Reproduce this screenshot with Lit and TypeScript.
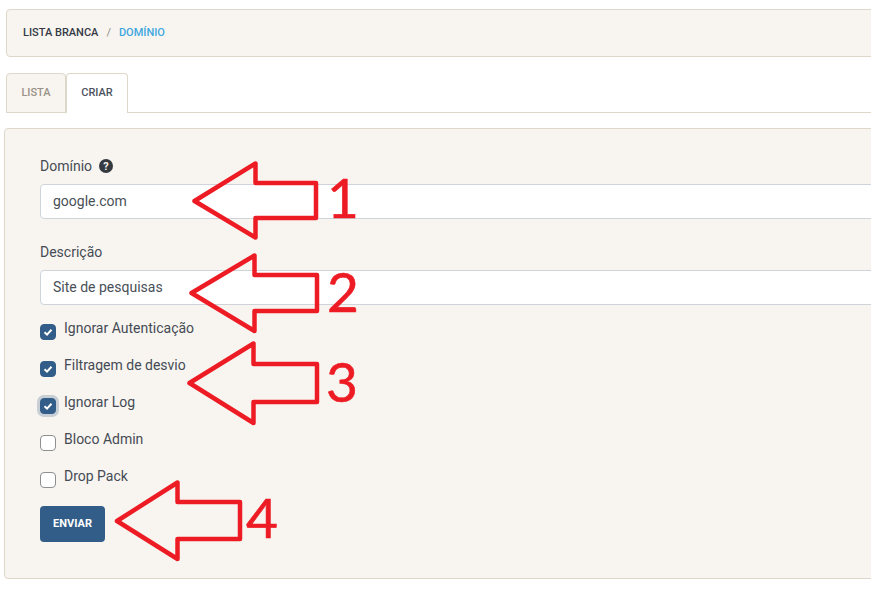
import { LitElement, html, css, svg } from "lit";
import { customElement } from "lit/decorators.js";

const ARROWS = [
  "194.5,201 255.5,163.5 255.5,183 316,183 316,218 255.5,218 255.5,237.5",
  "191.5,293 254.5,255.5 254.5,275 317,275 317,311 254.5,311 254.5,331",
  "189.5,383 253.5,343.5 253.5,364 317,364 317,402 253.5,402 253.5,423",
  "117,521 177.5,482.5 177.5,502 240,502 240,539 177.5,539 177.5,559",
];
const DIGITS: [string, number, number][] = [
  ["1", 327, 218],
  ["2", 327, 312],
  ["3", 326, 402],
  ["4", 246, 538],
];
const CHECKS = [
  { label: "Ignorar Autenticação", on: true },
  { label: "Filtragem de desvio", on: true },
  { label: "Ignorar Log", on: true, focus: true },
  { label: "Bloco Admin", on: false },
  { label: "Drop Pack", on: false },
];

@customElement("app-root")
export class AppRoot extends LitElement {
  static styles = css`
    :host {
      display: block;
      position: relative;
      width: 871px;
      height: 605px;
      overflow: hidden;
      background: #fff;
      font-family: Roboto, "Liberation Sans", sans-serif;
      color: #3e3f3a;
    }
    .page {
      width: 1000px;
      padding: 9px 0 0 4px;
      box-sizing: border-box;
    }
    .crumbs {
      margin-left: 2px;
      height: 48px;
      box-sizing: border-box;
      display: flex;
      align-items: center;
      gap: 7px;
      padding: 0 0 2px 16px;
      background: #f8f5f0;
      border: 1px solid #dfd7ca;
      border-radius: 4px;
      font-size: 11px;
      font-weight: 500;
    }
    .crumbs .root { color: #343a46; }
    .crumbs .sep { color: #8e8c84; font-weight: 400; margin: 0 1px; }
    .crumbs .cur { color: #3fa7e0; }
    .tabs {
      margin: 16px 0 0 2px;
      height: 39px;
      display: flex;
      border-bottom: 1px solid #dfd7ca;
    }
    .tab {
      height: 40px;
      box-sizing: border-box;
      display: flex;
      align-items: center;
      justify-content: center;
      padding-bottom: 2px;
      font-size: 11px;
      font-weight: 500;
      border: 1px solid #dfd7ca;
      border-radius: 4px 4px 0 0;
    }
    .tab.off { width: 60px; background: #f8f5f0; color: #9a9188; }
    .tab.on { width: 62px; background: #fff; color: #4c5360; border-bottom: 0; }
    .panel {
      margin-top: 15px;
      height: 451px;
      box-sizing: border-box;
      padding: 27px 0 0 35px;
      background: #f8f5f0;
      border: 1px solid #dfd7ca;
      border-radius: 4px;
    }
    label.field {
      display: flex;
      align-items: center;
      gap: 7px;
      height: 20px;
      font-size: 14px;
      color: #454b55;
    }
    .help { width: 14px; height: 14px; display: block; }
    .input {
      margin: 8px 0 23px;
      height: 35px;
      box-sizing: border-box;
      display: flex;
      align-items: center;
      padding: 0 0 2px 12px;
      background: #fff;
      border: 1px solid #ced4da;
      border-radius: 4px 0 0 4px;
      font-size: 14px;
      color: #495057;
    }
    .input.last { margin-bottom: 0; }
    .checks { display: flex; flex-direction: column; margin-top: 11px; gap: 17px; }
    .check { display: flex; gap: 8px; height: 20px; font-size: 14px; color: #454b55; line-height: 20px; }
    .check .txt { margin-top: 2px; }
    .box {
      margin-top: 8px;
      width: 16px;
      height: 16px;
      box-sizing: border-box;
      border-radius: 4px;
      border: 1px solid #8f8f8f;
      background: #fff;
      flex: none;
      display: flex;
      align-items: center;
      justify-content: center;
    }
    .box.on { background: #325d88; border-color: #325d88; }
    .box.focus { box-shadow: 0 0 0 3px rgba(50, 93, 136, 0.25); }
    .box svg { width: 10px; height: 10px; display: block; }
    button {
      display: block;
      margin-top: 22px;
      width: 65px;
      height: 36px;
      padding: 0 0 2px;
      border: 0;
      border-radius: 4px;
      background: #325d88;
      color: #fff;
      font: 700 11px Roboto, "Liberation Sans", sans-serif;
    }
    .overlay { position: absolute; inset: 0; width: 871px; height: 605px; pointer-events: none; }
    .overlay polygon { fill: none; stroke: #ed1c24; stroke-width: 4.5; stroke-linejoin: round; }
    .overlay text { fill: #ed1c24; stroke: #ed1c24; stroke-width: 0.6; font-family: Lato, sans-serif; font-size: 55px; }
  `;

  render() {
    return html`
      <div class="page">
        <div class="crumbs">
          <span class="root">LISTA BRANCA</span><span class="sep">/</span><span class="cur">DOMÍNIO</span>
        </div>
        <div class="tabs">
          <div class="tab off">LISTA</div>
          <div class="tab on">CRIAR</div>
        </div>
        <div class="panel">
          <label class="field">Domínio
            <svg class="help" viewBox="0 0 14 14">
              <circle cx="7" cy="7" r="7" fill="#343a40"></circle>
              <text x="7" y="11" text-anchor="middle" font-size="11" font-weight="700" fill="#f8f5f0" font-family="Roboto, sans-serif">?</text>
            </svg>
          </label>
          <div class="input">google.com</div>
          <label class="field">Descrição</label>
          <div class="input last">Site de pesquisas</div>
          <div class="checks">
            ${CHECKS.map(
              (c) => html`<div class="check">
                <span class="box ${c.on ? "on" : ""} ${c.focus ? "focus" : ""}">
                  ${c.on
                    ? html`<svg viewBox="0 0 10 10"><path d="M1.5 5.3 4 7.6 8.5 2.8" fill="none" stroke="#fff" stroke-width="2"></path></svg>`
                    : ""}
                </span>
                <span class="txt">${c.label}</span>
              </div>`
            )}
          </div>
          <button>ENVIAR</button>
        </div>
      </div>
      <svg class="overlay" viewBox="0 0 871 605">
        ${ARROWS.map((p) => svg`<polygon points=${p}></polygon>`)}
        ${DIGITS.map(([d, x, y]) => svg`<text x=${x} y=${y}>${d}</text>`)}
      </svg>
    `;
  }
}
